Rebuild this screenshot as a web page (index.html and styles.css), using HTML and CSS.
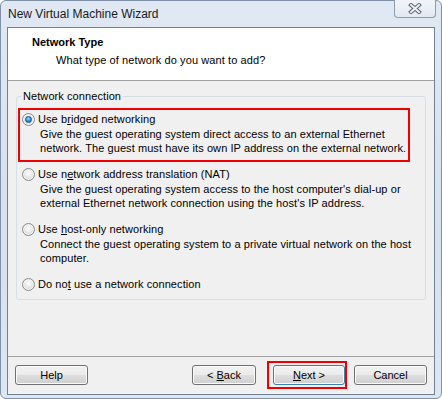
FILE: index.html
```html
<!DOCTYPE html>
<html lang="en">
<head>
    <meta charset="UTF-8">
    <title>New Virtual Machine Wizard</title>
    <link rel="stylesheet" href="styles.css">
</head>
<body>

<div class="window">
    <div class="titlebar">
        <span class="title">New Virtual Machine Wizard</span>
        <div class="close">
            <svg width="16" height="11" viewBox="0 0 16 11">
                <path d="M4 2 L12 9 M12 2 L4 9" stroke="#5e666f" stroke-width="4" stroke-linecap="square" fill="none"/>
                <path d="M4 2 L12 9 M12 2 L4 9" stroke="#eef1f4" stroke-width="2" stroke-linecap="square" fill="none"/>
            </svg>
        </div>
    </div>

    <div class="client">
        <div class="header">
            <div class="header-title">Network Type</div>
            <div class="header-sub">What type of network do you want to add?</div>
        </div>

        <div class="content">
            <fieldset class="group">
                <legend>Network connection</legend>

                <div class="option marked">
                    <div class="option-label"><span class="radio checked"></span><span>Use b<u>r</u>idged networking</span></div>
                    <div class="option-desc">Give the guest operating system direct access to an external Ethernet network. The guest must have its own IP address on the external network.</div>
                </div>

                <div class="option">
                    <div class="option-label"><span class="radio"></span><span>Use n<u>e</u>twork address translation (NAT)</span></div>
                    <div class="option-desc">Give the guest operating system access to the host computer's dial-up or external Ethernet network connection using the host's IP address.</div>
                </div>

                <div class="option">
                    <div class="option-label"><span class="radio"></span><span>Use <u>h</u>ost-only networking</span></div>
                    <div class="option-desc">Connect the guest operating system to a private virtual network on the host computer.</div>
                </div>

                <div class="option">
                    <div class="option-label"><span class="radio"></span><span>Do no<u>t</u> use a network connection</span></div>
                </div>
            </fieldset>
        </div>

        <div class="footer">
            <button class="btn btn-help">Help</button>
            <button class="btn btn-back">&lt; <u>B</u>ack</button>
            <span class="next-wrap"><button class="btn btn-next"><u>N</u>ext &gt;</button></span>
            <button class="btn btn-cancel">Cancel</button>
        </div>
    </div>
</div>

</body>
</html>
```

FILE: styles.css
```css
html {
    font-size: 11px;
}

body {
    margin: 0;
    font-family: 'Liberation Sans', Arial, sans-serif;
    font-size: 11px;
    color: #000;
    background: #fff;
}

.window {
    width: 442px;
    height: 399px;
    box-sizing: border-box;
    border: 1px solid #7f91a6;
    border-radius: 6px;
    background: linear-gradient(to bottom, #dfe8f3, #d6e1ee 60%, #dde7f2);
    display: flex;
    flex-direction: column;
}

.titlebar {
    height: 26px;
    display: flex;
    align-items: flex-start;
    padding-left: 7px;
}

.title {
    font-size: 12px;
    line-height: 26px;
    color: #1b1b1b;
}

.close {
    margin-left: auto;
    margin-right: 5px;
    margin-top: -1px;
    width: 42px;
    height: 18px;
    box-sizing: border-box;
    border: 1px solid #8d9cad;
    border-top: none;
    border-radius: 0 0 4px 4px;
    background: linear-gradient(to bottom, #f1f5fa, #e2e9f2);
    display: flex;
    justify-content: center;
    align-items: center;
}

.client {
    margin: 0 6px;
    height: 368px;
    box-sizing: border-box;
    border: 1px solid #6f8194;
    background: #f0f0f0;
    display: flex;
    flex-direction: column;
}

.header {
    height: 53px;
    box-sizing: border-box;
    background: #fff;
    border-bottom: 1px solid #a0a0a0;
    padding: 7px 0 0 24px;
    line-height: 14px;
}

.header-title {
    font-weight: bold;
}

.header-sub {
    margin-top: 4px;
    padding-left: 24px;
    letter-spacing: 0.1px;
}

.content {
    flex: 1;
    padding: 8px 8px 0 8px;
}

.group {
    margin: 0;
    padding: 9px 0 8px 0;
    border: 1px solid #d5dfe5;
    border-radius: 3px;
    line-height: 14px;
    letter-spacing: 0.08px;
}

.group legend {
    margin-left: 4px;
    padding: 0 2px;
}

.option {
    position: relative;
    padding-left: 5px;
    margin-bottom: 12px;
}

.option:last-child {
    margin-bottom: 0;
}

.option-label {
    display: flex;
    align-items: center;
}

.option-desc {
    margin-top: 1px;
    padding-left: 18px;
    padding-right: 6px;
}

.marked::after {
    content: "";
    position: absolute;
    top: -4px;
    left: 1px;
    right: 15px;
    bottom: -7px;
    border: 2px solid #f00000;
}

.radio {
    width: 13px;
    height: 13px;
    box-sizing: border-box;
    border-radius: 50%;
    border: 1px solid #8a8a8a;
    background: radial-gradient(circle at 50% 40%, #ffffff 0%, #e8e8e8 45%, #c9c9c9 100%);
    box-shadow: inset 0 0 0 1px #f4f4f4;
    margin-right: 3px;
    display: flex;
    justify-content: center;
    align-items: center;
}

.radio.checked::after {
    content: "";
    width: 7px;
    height: 7px;
    box-sizing: border-box;
    border-radius: 50%;
    border: 1px solid #1b4f8a;
    background: radial-gradient(circle at 45% 35%, #9fe0ff 0%, #2a8de0 55%, #145fb0 100%);
}

.footer {
    height: 38px;
    box-sizing: border-box;
    border-top: 1px solid #a0a0a0;
    padding: 8px 7px 0 7px;
    display: flex;
    align-items: flex-start;
}

.btn {
    height: 20px;
    padding: 0;
    margin: 0;
    font-family: inherit;
    font-size: 11px;
    color: #000;
    border: 1px solid #707070;
    border-radius: 3px;
    background: linear-gradient(to bottom, #f2f2f2 0%, #ebebeb 48%, #dddddd 52%, #cfcfcf 100%);
    box-shadow: inset 0 0 0 1px #fafafa;
}

.btn-help {
    width: 73px;
}

.btn-back {
    width: 64px;
    margin-left: auto;
}

.next-wrap {
    position: relative;
    display: flex;
    margin-left: 17px;
}

.next-wrap::after {
    content: "";
    position: absolute;
    top: -4px;
    left: -6px;
    right: -2px;
    bottom: -4px;
    border: 2px solid #f00000;
}

.btn-next {
    width: 72px;
    border-color: #3c7fb1;
}

.btn-cancel {
    width: 73px;
    margin-left: 9px;
}
```
